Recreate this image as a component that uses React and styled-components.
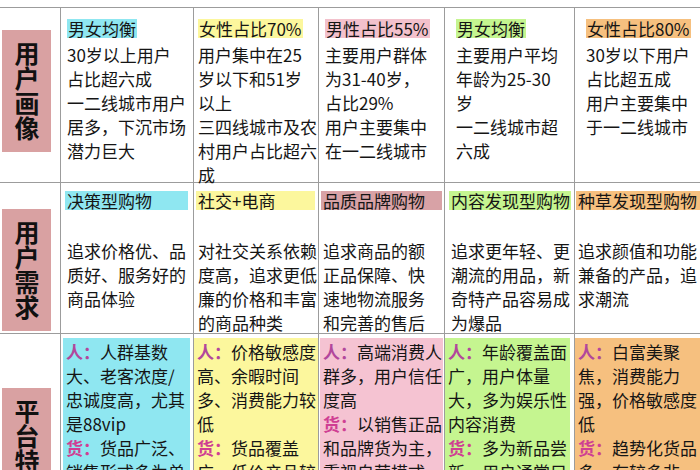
import styled, { createGlobalStyle } from "styled-components";

const GlobalStyle = createGlobalStyle`
  html, body {
    margin: 0;
    padding: 0;
    background: #fff;
  }
  body {
    width: 700px;
    height: 470px;
    overflow: hidden;
    font-family: "Noto Sans CJK SC", "Noto Sans", sans-serif;
    color: #151515;
  }
`;

const colors = {
  cyan: "#8fe7f1",
  yellow: "#fcf79d",
  pink: "#f3c1cc",
  rose: "#d8a2a6",
  green: "#c5f590",
  orange: "#f6c07f",
  softPink: "#f5c3d2",
};

const COLS = "60px 133px 125px 126px 130px 126px";

const profile = [
  { tag: "男女均衡", bg: colors.cyan, pad: 6, lines: ["30岁以上用户", "占比超六成", "一二线城市用户", "居多，下沉市场", "潜力巨大"] },
  { tag: "女性占比70%", bg: colors.yellow, pad: 4, lines: ["用户集中在25", "岁以下和51岁", "以上", "三四线城市及农", "村用户占比超六", "成"] },
  { tag: "男性占比55%", bg: colors.pink, pad: 6, lines: ["主要用户群体", "为31-40岁，", "占比29%", "用户主要集中", "在一二线城市"] },
  { tag: "男女均衡", bg: colors.green, pad: 11, lines: ["主要用户平均", "年龄为25-30", "岁", "一二线城市超", "六成"] },
  { tag: "女性占比80%", bg: colors.orange, pad: 11, lines: ["30岁以下用户", "占比超五成", "用户主要集中", "于一二线城市"] },
];

const needs = [
  { tag: "决策型购物", bg: colors.cyan, pl: 4, pr: 5, lines: ["追求价格优、品", "质好、服务好的", "商品体验"] },
  { tag: "社交+电商", bg: colors.yellow, pl: 2, pr: 3, lines: ["对社交关系依赖", "度高，追求更低", "廉的价格和丰富", "的商品种类"] },
  { tag: "品质品牌购物", bg: colors.rose, pl: 2, pr: 2, lines: ["追求商品的额", "正品保障、快", "速地物流服务", "和完善的售后"] },
  { tag: "内容发现型购物", bg: colors.green, pl: 4, pr: 3, lines: ["追求更年轻、更", "潮流的用品，新", "奇特产品容易成", "为爆品"] },
  { tag: "种草发现型购物", bg: colors.orange, pl: 1, pr: 0, lines: ["追求颜值和功能", "兼备的产品，追", "求潮流"] },
];

const traits = [
  {
    bg: colors.cyan, ml: 2, mr: 3,
    lines: [["人", "人群基数"], "大、老客浓度/", "忠诚度高，尤其", "是88vip", ["货", "货品广泛、"], "销售形式多为单", "一店铺"],
  },
  {
    bg: colors.yellow, ml: 0, mr: 0,
    lines: [["人", "价格敏感度"], "高、余暇时间", "多、消费能力较", "低", ["货", "货品覆盖"], "广，低价产品较", "多"],
  },
  {
    bg: colors.softPink, ml: 1, mr: 1,
    lines: [["人", "高端消费人"], "群多，用户信任", "度高", ["货", "以销售正品"], "和品牌货为主，", "重视自营模式", "发展"],
  },
  {
    bg: colors.green, ml: 0, mr: 4,
    lines: [["人", "年龄覆盖面"], "广，用户体量", "大，多为娱乐性", "内容消费", ["货", "多为新品尝"], "新，用户通常只", "买一次"],
  },
  {
    bg: colors.orange, ml: 0, mr: 0,
    lines: [["人", "白富美聚"], "焦，消费能力", "强，价格敏感度", "低", ["货", "趋势化货品"], "多，有较多非", "标品"],
  },
];

const Page = styled.div`
  padding-top: 7px;
`;

const Row = styled.div`
  display: grid;
  grid-template-columns: ${COLS};
  height: ${(p) => (p.$height ? `${p.$height}px` : "auto")};
  box-sizing: border-box;
  border-top: 1px solid #9c9c9c;
`;

const LabelCell = styled.div`
  overflow: hidden;
`;

const LabelBox = styled.div`
  margin: ${(p) => p.$top}px 0 0 2px;
  width: 49px;
  height: 122px;
  background: #d9a1a2;
  display: flex;
  align-items: center;
  justify-content: center;
  writing-mode: vertical-rl;
  text-orientation: upright;
  font-size: 25px;
  line-height: 49px;
  font-weight: 700;
  color: #111;
  letter-spacing: 0;
`;

const Cell = styled.div`
  border-left: 1px solid #9c9c9c;
  padding: ${(p) => p.$top || 0}px ${(p) => p.$pr || 0}px 0 ${(p) => p.$pl || 0}px;
  font-size: 17px;
  line-height: 24px;
  white-space: nowrap;
  overflow: visible;
`;

const InlineTag = styled.span`
  display: inline-block;
  height: 19px;
  line-height: 19px;
  padding: 0 1px;
  margin-bottom: 5px;
  background: ${(p) => p.$bg};
`;

const BlockTag = styled.div`
  height: 19px;
  line-height: 19px;
  padding-left: 2px;
  background: ${(p) => p.$bg};
  margin-bottom: 29px;
`;

const Line = styled.div`
  padding-left: ${(p) => p.$indent || 0}px;
`;

const TraitBox = styled.div`
  margin: 0 ${(p) => p.$mr}px 0 ${(p) => p.$ml}px;
  padding: 2px 0 0 3px;
  min-height: 140px;
  background: ${(p) => p.$bg};
`;

const Key = styled.span`
  color: ${(p) => (p.$kind === "人" ? "#b2479c" : "#cf3f93")};
  font-weight: 700;
`;

function Label({ text, top }) {
  return (
    <LabelCell>
      <LabelBox $top={top}>{text}</LabelBox>
    </LabelCell>
  );
}

export default function App() {
  return (
    <>
      <GlobalStyle />
      <Page>
        <Row $height={175}>
          <Label text="用户画像" top={22} />
          {profile.map((c, i) => (
            <Cell key={i} $top={9} $pl={c.pad}>
              <InlineTag $bg={c.bg}>{c.tag}</InlineTag>
              {c.lines.map((l, j) => (
                <Line key={j}>{l}</Line>
              ))}
            </Cell>
          ))}
        </Row>
        <Row $height={151}>
          <Label text="用户需求" top={26} />
          {needs.map((c, i) => (
            <Cell key={i} $top={8} $pl={c.pl} $pr={c.pr}>
              <BlockTag $bg={c.bg}>{c.tag}</BlockTag>
              {c.lines.map((l, j) => (
                <Line key={j} $indent={2}>{l}</Line>
              ))}
            </Cell>
          ))}
        </Row>
        <Row>
          <Label text="平台特点" top={54} />
          {traits.map((c, i) => (
            <Cell key={i} $top={4}>
              <TraitBox $bg={c.bg} $ml={c.ml} $mr={c.mr}>
                {c.lines.map((l, j) =>
                  Array.isArray(l) ? (
                    <Line key={j}>
                      <Key $kind={l[0]}>{l[0]}：</Key>
                      {l[1]}
                    </Line>
                  ) : (
                    <Line key={j}>{l}</Line>
                  )
                )}
              </TraitBox>
            </Cell>
          ))}
        </Row>
      </Page>
    </>
  );
}
